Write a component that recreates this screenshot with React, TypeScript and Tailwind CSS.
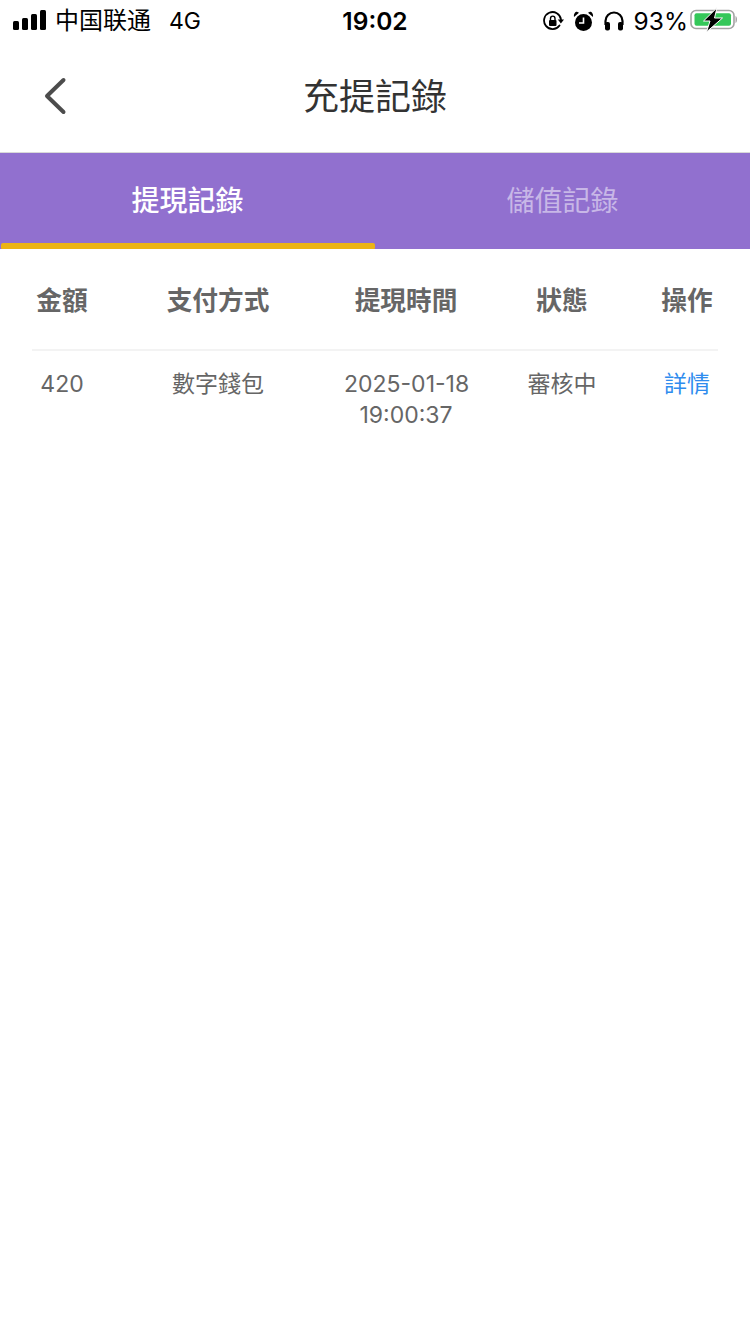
const CJK = "font-['Inter','Noto_Sans_CJK_TC',sans-serif]"

const COLUMNS = 'grid grid-cols-[60px_252px_124px_188px_62px] text-center'

function SignalBars() {
  return (
    <svg className="mb-[2px]" width="34" height="20" viewBox="0 0 34 20" fill="#000">
      <rect x="0" y="11" width="6" height="9" rx="1.5" />
      <rect x="9" y="8" width="6" height="12" rx="1.5" />
      <rect x="18" y="4" width="6" height="16" rx="1.5" />
      <rect x="27" y="0" width="6" height="20" rx="1.5" />
    </svg>
  )
}

function RotationLock() {
  return (
    <svg width="21" height="20" viewBox="0 0 21 20" fill="none">
      <path d="M16.500 14.500A8.500 8.500 0 1 1 18 8.500" stroke="#000" strokeWidth="1.800" strokeLinecap="round" />
      <path d="M14.800 8.500h6.200l-3.100 4z" fill="#000" />
      <rect x="6" y="9" width="7.500" height="6" rx="1" fill="#000" />
      <path d="M7.500 9V7.400a2.250 2.250 0 0 1 4.500 0V9" stroke="#000" strokeWidth="1.400" />
    </svg>
  )
}

function Alarm() {
  return (
    <svg width="21" height="21" viewBox="0 0 21 21" fill="none">
      <circle cx="10.500" cy="11.500" r="8.500" fill="#000" />
      <path d="M10.500 6.500v5.500H6" stroke="#fff" strokeWidth="1.600" />
      <path d="M1 6 6 1.800 4 .8C2.200.8.500 2.800 1 6zM20 6 15 1.800 17 .8C18.800.8 20.500 2.800 20 6z" fill="#000" />
    </svg>
  )
}

function Headphones() {
  return (
    <svg width="20" height="20" viewBox="0 0 20 20" fill="none">
      <path d="M1.500 14V10a8.500 8.500 0 0 1 17 0v4" stroke="#000" strokeWidth="2.200" />
      <rect x="1" y="11" width="5" height="8.500" rx="2" fill="#000" />
      <rect x="14" y="11" width="5" height="8.500" rx="2" fill="#000" />
    </svg>
  )
}

function Battery() {
  return (
    <svg width="47" height="28" viewBox="0 0 47 28" fill="none">
      <rect x="1" y="3.500" width="43" height="18" rx="5" stroke="#a3a3a3" strokeWidth="1.600" />
      <rect x="4.500" y="6.300" width="36.500" height="12.500" rx="2" fill="#34c759" />
      <path d="M45.500 9c1 .5 1.500 1.900 1.500 3.500s-.5 3-1.500 3.500z" fill="#a3a3a3" />
      <path d="M27 .8 13.500 14h6.500L16.500 25 32.500 11h-8z" fill="#000" stroke="#fff" strokeWidth="1" />
    </svg>
  )
}

function StatusBar() {
  return (
    <div className="flex h-[42px] items-center justify-between pl-[13px] pr-[13px] text-black font-['Inter','Noto_Sans_CJK_SC',sans-serif]">
      <div className="flex w-[280px] items-center">
        <SignalBars />
        <span className="ml-[8px] text-[24px] leading-none">中国联通</span>
        <span className="ml-[18px] text-[23px] leading-none">4G</span>
      </div>
      <span className="text-[24.500px] font-semibold leading-none">19:02</span>
      <div className="flex w-[280px] items-center justify-end">
        <RotationLock />
        <span className="ml-[9px] flex"><Alarm /></span>
        <span className="ml-[10px] flex"><Headphones /></span>
        <span className="ml-[10px] text-[24.500px] leading-none">93%</span>
        <span className="ml-[2px] flex"><Battery /></span>
      </div>
    </div>
  )
}

function NavBar() {
  return (
    <header className="relative flex h-[111px] items-center justify-center border-b border-[#d9d9d9]">
      <button className="absolute left-[40px] top-[32px]">
        <svg width="30" height="44" viewBox="0 0 30 44" fill="none">
          <path d="M23.500 6 7 22 23.500 38" stroke="#4c4c4c" strokeWidth="4" strokeLinecap="round" strokeLinejoin="round" />
        </svg>
      </button>
      <h1 className={`${CJK} text-[36px] font-normal leading-none text-[#333]`}>充提記錄</h1>
    </header>
  )
}

function Tabs() {
  return (
    <div className={`${CJK} flex h-[96px] bg-[#9170cf] text-[28px]`}>
      <div className="relative flex w-[375px] items-center justify-center font-medium text-white">
        提現記錄
        <span className="absolute bottom-0 left-[1px] right-0 h-[6px] rounded-t-[2px] rounded-b-[1px] bg-[#ecb414]" />
      </div>
      <div className="flex w-[375px] items-center justify-center text-white/50">儲值記錄</div>
    </div>
  )
}

function RecordTable() {
  return (
    <div className={`${CJK} mx-[32px] mt-[30px]`}>
      <div className={`${COLUMNS} h-[72px] border-b-2 border-[#f3f3f3] pt-[5px] text-[25.700px] font-semibold leading-[34px] text-[#666]`}>
        <div>金額</div>
        <div>支付方式</div>
        <div>提現時間</div>
        <div>狀態</div>
        <div>操作</div>
      </div>
      <div className={`${COLUMNS} pt-[18px] text-[23px] leading-[31px] text-[#666]`}>
        <div>420</div>
        <div>數字錢包</div>
        <div className="whitespace-nowrap">2025-01-18<br />19:00:37</div>
        <div>審核中</div>
        <div className="text-[#2f8cee]">詳情</div>
      </div>
    </div>
  )
}

export default function App() {
  return (
    <div className="min-h-[1334px] w-[750px] bg-white">
      <StatusBar />
      <NavBar />
      <Tabs />
      <RecordTable />
    </div>
  )
}
